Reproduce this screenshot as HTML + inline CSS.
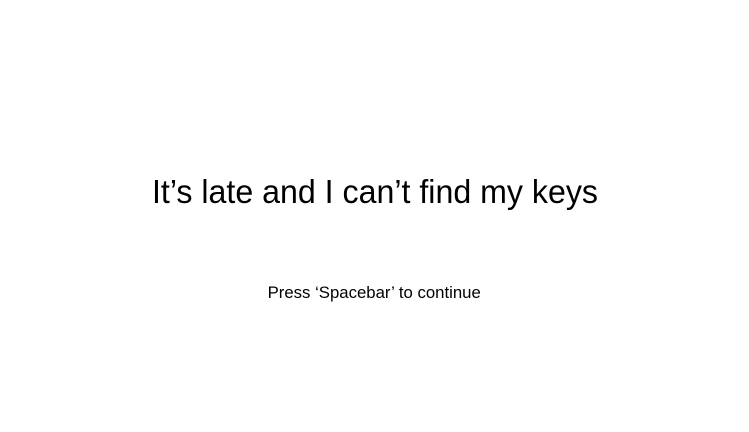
<!DOCTYPE html>
<html><head><meta charset="utf-8"><style>
html,body{margin:0;padding:0;background:#fff;}
body{width:749px;height:432px;position:relative;overflow:hidden;font-family:"Liberation Sans",sans-serif;color:#000;}
.t{position:absolute;left:0;width:749px;text-align:center;white-space:nowrap;}
.t1{top:172px;font-size:33px;line-height:40px;}
.t1 span{display:inline-block;transform:scaleX(0.974);transform-origin:center;}
.t2{top:283px;font-size:17px;line-height:20px;}
.t2 span{display:inline-block;transform:scaleX(0.985);transform-origin:center;}
</style></head><body>
<div class="t t1"><span>It’s late and I can’t find my keys</span></div>
<div class="t t2"><span>Press ‘Spacebar’ to continue</span></div>
</body></html>
